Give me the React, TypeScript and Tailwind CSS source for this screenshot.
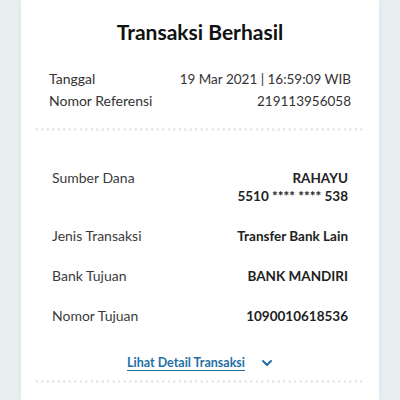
import React from 'react';

const Dots = () => (
  <div className="mx-[13px] h-[3px] bg-[radial-gradient(circle,#dbe2e8_1px,transparent_1.4px)] bg-[length:5.5px_3px]" />
);

const Row = ({ label, children }: { label: string; children: React.ReactNode }) => (
  <div className="flex justify-between items-start">
    <span className="text-[14px] text-[#3b3b3b]">{label}</span>
    <div className="text-right text-[13.5px] font-bold text-[#222]">{children}</div>
  </div>
);

export default function App() {
  return (
    <div className="w-[400px] h-[400px] bg-[#e9eef1] overflow-hidden font-['Lato','Noto_Sans',sans-serif]">
      <div className="ml-[21px] w-[358px] h-full bg-white shadow-[0_0_6px_rgba(60,80,100,0.08)] flex flex-col">
        <h1 className="pt-[18px] text-center text-[21px] leading-[28px] font-bold text-[#111]">Transaksi Berhasil</h1>

        <div className="mt-[22px] px-[28px] text-[14px] leading-[22px] text-[#333] flex flex-col">
          <div className="flex justify-between">
            <span>Tanggal</span>
            <span className="text-[13.5px]">19 Mar 2021 | 16:59:09 WIB</span>
          </div>
          <div className="flex justify-between">
            <span>Nomor Referensi</span>
            <span className="text-[13.5px]">219113956058</span>
          </div>
        </div>

        <div className="mt-[16px]">
          <Dots />
        </div>

        <div className="mt-[38px] px-[31px] leading-[18px] flex flex-col gap-[22px]">
          <Row label="Sumber Dana">
            <div>RAHAYU</div>
            <div>5510 **** **** 538</div>
          </Row>
          <Row label="Jenis Transaksi">Transfer Bank Lain</Row>
          <Row label="Bank Tujuan">BANK MANDIRI</Row>
          <Row label="Nomor Tujuan">1090010618536</Row>
        </div>

        <div className="mt-[29px] flex justify-center items-center gap-[16px] h-[18px]">
          <span className="text-[12.5px] font-bold text-[#1f6fa6] underline underline-offset-[3px]">Lihat Detail Transaksi</span>
          <svg width="12" height="8" viewBox="0 0 12 8" fill="none">
            <path d="M2 2l4 4 4-4" stroke="#1f6fa6" strokeWidth="2" strokeLinecap="round" strokeLinejoin="round" />
          </svg>
        </div>

        <div className="mt-[8px]">
          <Dots />
        </div>
      </div>
    </div>
  );
}
